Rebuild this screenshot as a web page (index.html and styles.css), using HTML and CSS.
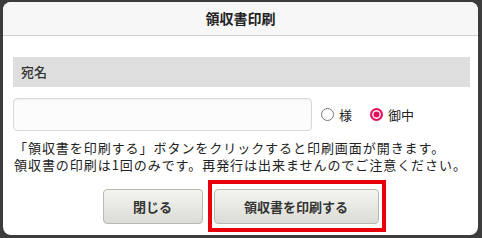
FILE: index.html
```html
<!DOCTYPE html>
<html lang="ja">
<head>
    <meta charset="utf-8">
    <title>領収書印刷</title>
    <link rel="stylesheet" href="styles.css">
</head>
<body>
    <div class="dialog">
        <div class="dialog-head">領収書印刷</div>
        <div class="dialog-body">
            <div class="field-label">宛名</div>
            <div class="name-row">
                <input type="text" class="name-input">
                <label class="radio"><input type="radio" name="suffix"><span>様</span></label>
                <label class="radio"><input type="radio" name="suffix" checked><span>御中</span></label>
            </div>
            <div class="note">
                <p>「領収書を印刷する」ボタンをクリックすると印刷画面が開きます。</p>
                <p>領収書の印刷は1回のみです。再発行は出来ませんのでご注意ください。</p>
            </div>
            <div class="buttons">
                <button class="btn btn-close">閉じる</button>
                <span class="highlight"><button class="btn btn-print">領収書を印刷する</button></span>
            </div>
        </div>
    </div>
</body>
</html>
```

FILE: styles.css
```css
html, body {
    margin: 0;
    padding: 0;
    height: 238px;
    overflow: hidden;
}
body {
    background-color: #3c3c3c;
    font-family: "Noto Sans CJK JP", "Noto Sans", sans-serif;
    color: #222;
}
.dialog {
    margin: 2px 4px 0 3px;
    height: 233px;
    background-color: #fff;
    border-radius: 8px;
    overflow: hidden;
}
.dialog-head {
    height: 33px;
    line-height: 33px;
    background-color: #f7f7f7;
    border-bottom: 1px solid #cfcfcf;
    text-align: center;
    font-size: 14px;
    font-weight: bold;
    color: #222;
}
.dialog-body {
    padding: 21px 8px 0 10px;
}
.field-label {
    height: 30px;
    line-height: 30px;
    padding-left: 8px;
    background-color: #dedede;
    font-size: 13px;
    font-weight: 500;
    color: #333;
}
.name-row {
    display: flex;
    align-items: center;
    margin-top: 11px;
}
.name-input {
    box-sizing: border-box;
    width: 299px;
    height: 33px;
    margin: 0;
    border: 1px solid #d8d8d8;
    border-radius: 4px;
    background-color: #fcfcfc;
    box-shadow: inset 0 1px 2px rgba(0, 0, 0, 0.06);
}
.radio {
    display: flex;
    align-items: center;
    gap: 5px;
    margin-left: 9px;
    font-size: 13px;
    color: #222;
}
.radio + .radio {
    margin-left: 18px;
}
.radio input {
    appearance: none;
    box-sizing: border-box;
    width: 13px;
    height: 13px;
    margin: 0;
    border: 1px solid #777;
    border-radius: 50%;
    background-color: #fff;
}
.radio input:checked {
    border: 2px solid #e5115c;
    box-shadow: inset 0 0 0 1.5px #fff;
    background-color: #e5115c;
}
.note {
    margin: 8px 0 0 1px;
    font-size: 13px;
    letter-spacing: 0.95px;
}
.note p {
    margin: 0;
    height: 17px;
    line-height: 17px;
    white-space: nowrap;
}
.buttons {
    display: flex;
    justify-content: center;
    gap: 11px;
    margin-top: 16px;
    padding-right: 2px;
}
.btn {
    height: 35px;
    border: 1px solid #b9b9b4;
    border-radius: 4px;
    background: linear-gradient(#f4f4f1, #dcdcd6);
    font-family: inherit;
    font-size: 13px;
    font-weight: bold;
    color: #333;
    cursor: pointer;
}
.btn-close {
    width: 100px;
}
.btn-print {
    width: 165px;
}
.highlight {
    position: relative;
    display: block;
}
.highlight::after {
    content: "";
    position: absolute;
    top: -9px;
    bottom: -8px;
    left: -6px;
    right: -7px;
    border: 4px solid #e8000b;
    pointer-events: none;
}
```
